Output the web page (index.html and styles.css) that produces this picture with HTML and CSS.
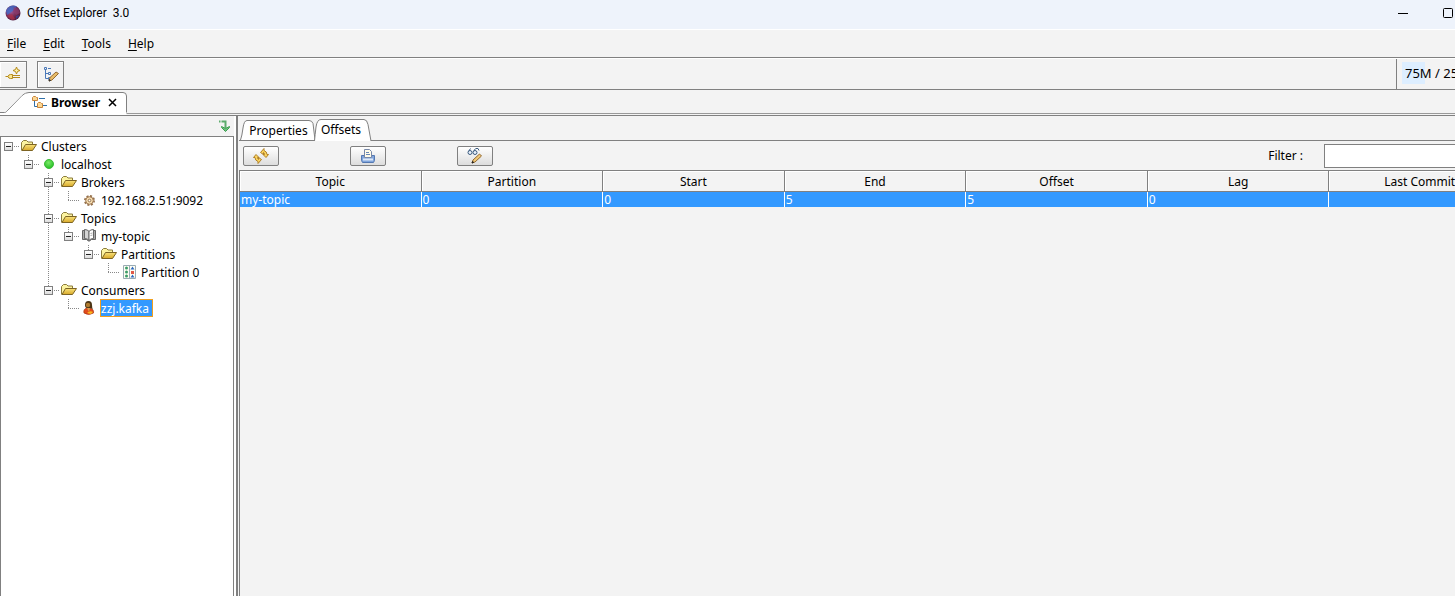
FILE: index.html
```
<!DOCTYPE html>
<html lang="en">
<head>
<meta charset="UTF-8">
<title>Offset Explorer 3.0</title>
<link rel="stylesheet" href="styles.css">
</head>
<body>

<svg class="defs" width="0" height="0">
  <defs>
    <linearGradient id="gold" x1="0" y1="0" x2="0" y2="1">
      <stop offset="0" stop-color="#f8e27a"/>
      <stop offset="1" stop-color="#d8a828"/>
    </linearGradient>
    <radialGradient id="ball" cx="0.35" cy="0.4" r="0.7">
      <stop offset="0" stop-color="#a05a9a"/>
      <stop offset="0.5" stop-color="#7a2f58"/>
      <stop offset="1" stop-color="#4a1838"/>
    </radialGradient>
    <radialGradient id="green" cx="0.45" cy="0.35" r="0.6">
      <stop offset="0" stop-color="#7be868"/>
      <stop offset="1" stop-color="#2cc22a"/>
    </radialGradient>
    <symbol id="folder" viewBox="0 0 16 16">
      <path d="M.5 12.500V4.500l2-2h3l1.500 1.500h4.500v3" fill="#fbf3a0" stroke="#8b7b3a"/>
      <path d="M1 12.500L4.500 6.500h11l-4 6z" fill="url(#gold)" stroke="#7d6423"/>
    </symbol>
  </defs>
</svg>

<header class="titlebar">
  <svg class="logo" width="16" height="16" viewBox="0 0 16 16">
    <circle cx="8" cy="8" r="7.500" fill="url(#ball)"/>
    <path d="M1 6a7.500 7.500 0 0 1 11-4.500L8 6 2 10z" fill="#3a6fd0" opacity=".75"/>
    <path d="M9 2a7 7 0 0 1 6 6l-4 2-3-4z" fill="#8c3c70" opacity=".7"/>
    <path d="M2 11l5-2 3 5-3 1z" fill="#b03048" opacity=".7"/>
    <path d="M11 11l4-1-4 4z" fill="#3048a0" opacity=".8"/>
  </svg>
  <span class="title">Offset Explorer&nbsp; 3.0</span>
  <button class="winbtn" aria-label="Minimize"><svg width="11" height="11" viewBox="0 0 11 11"><path d="M0 5.500h10" stroke="#000"/></svg></button>
  <button class="winbtn" aria-label="Maximize"><svg width="11" height="11" viewBox="0 0 11 11"><rect x=".5" y=".5" width="9" height="9" rx="1" fill="none" stroke="#000"/></svg></button>
</header>

<nav class="menubar">
  <button><u>F</u>ile</button>
  <button><u>E</u>dit</button>
  <button><u>T</u>ools</button>
  <button><u>H</u>elp</button>
</nav>

<div class="toolbar">
  <button class="tool first" aria-label="Add connection">
    <svg width="16" height="16" viewBox="0 0 16 16" fill="none" stroke="#b58a1c">
      <path d="M11.500 1l1 2.500 2.500 1-2.500 1-1 2.500-1-2.500-2.500-1 2.500-1z" fill="#fdf0a0"/>
      <path d="M.5 10.500H3M7.500 8.500h-2q-2 0-2.500 2 .5 2 2.500 2h2z" fill="#fbe68c"/>
      <path d="M8 9.500h7M8 11.500h7"/>
    </svg>
  </button>
  <button class="tool" aria-label="Edit tree">
    <svg width="16" height="16" viewBox="0 0 16 16" fill="none" stroke="#4a78b8">
      <path d="M1.500 1.500h2v2h-2zM2.500 4v8.500h3M2.500 7.500h3M5.500 6.500h2v2h-2zM5.500 11.500h2v2h-2zM5 2.500h3"/>
      <path d="M6 15l1-3.500L13 6l2.500 1.500L9 14z" fill="#e8bc68" stroke="#946a30"/>
      <path d="M6 15l.6-1.500.9 1z" fill="#222" stroke="#333"/>
    </svg>
  </button>
  <div class="memory"><span>75M / 25</span></div>
</div>

<div class="viewtabs">
  <div class="viewtab">
    <svg class="shape" width="128" height="24" viewBox="0 0 128 24">
      <path d="M0 21.500H4.500Q6 21.500 8 19L22 4.500Q25 1.500 29 1.500h94q3.500 0 3.500 3.500V24H0z" fill="#fff"/>
      <path d="M0 21.500H4.500Q6 21.500 8 19L22 4.500Q25 1.500 29 1.500h94q3.500 0 3.500 3.500v16.500" fill="none" stroke="#808080"/>
      <path d="M0 0H29Q25 1 22 4L8 18.500Q6 21 4.500 21H0z" fill="#f3f3f3"/>
    </svg>
    <svg class="tabicon" width="16" height="16" viewBox="0 0 16 16">
      <path d="M2.500 6v5.500H6M7 3.500h6M11 10.500h4" fill="none" stroke="#2f6fa8"/>
      <path d="M.5 5.500v-3l1-1h2l1 1h1v3z" fill="#fbd896" stroke="#c8843a"/>
      <path d="M5.500 12.500v-4l1-1h2l1 1h1v4z" fill="#fbd896" stroke="#c8843a"/>
    </svg>
    <b>Browser</b>
    <button class="close" aria-label="Close"><svg width="9" height="9" viewBox="0 0 9 9"><path d="M1 1l7 7M8 1L1 8" stroke="#000" stroke-width="1.500"/></svg></button>
  </div>
</div>

<main class="main">
  <aside class="side">
    <div class="sidebar-head">
      <button class="sync" aria-label="Follow selection">
        <svg width="13" height="13" viewBox="0 0 13 13"><path d="M1 1.500h1.500M3.500 1.500h4V8" fill="none" stroke="#5cac6c" stroke-width="2"/><path d="M3.500 6.500l4 2 4-2v1l-4 4-4-4z" fill="#6cc47c" stroke="#3c9c50"/></svg>
      </button>
    </div>
    <div class="treebox">
      <ul class="tree">
        <li>
          <div class="row"><i class="exp"></i><svg class="ico"><use href="#folder"/></svg><span>Clusters</span></div>
          <ul>
            <li>
              <div class="row"><i class="exp"></i><svg class="ico" viewBox="0 0 16 16"><circle cx="8" cy="8" r="4.500" fill="url(#green)" stroke="#3dbb38"/></svg><span>localhost</span></div>
              <ul>
                <li>
                  <div class="row"><i class="exp"></i><svg class="ico"><use href="#folder"/></svg><span>Brokers</span></div>
                  <ul>
                    <li><div class="row leaf"><svg class="ico" viewBox="0 0 16 16"><circle cx="8.500" cy="8.500" r="4.500" fill="none" stroke="#94704c" stroke-width="2" stroke-dasharray="2 1.530"/><circle cx="8.500" cy="8.500" r="3.800" fill="#f4dcb0" stroke="#a07850"/><circle cx="8.500" cy="8.500" r="1.300" fill="#fff" stroke="#94704c"/></svg><span>192.168.2.51:9092</span></div></li>
                  </ul>
                </li>
                <li>
                  <div class="row"><i class="exp"></i><svg class="ico"><use href="#folder"/></svg><span>Topics</span></div>
                  <ul>
                    <li>
                      <div class="row"><i class="exp"></i><svg class="ico" viewBox="0 0 16 16"><path d="M3 2.500H1.500v9h4l2 1.500h1l2-1.500h4v-9H13" fill="#aaa" stroke="#666"/><path d="M3.500 1.500q3 0 4.500 2v9q-1.500-2-4.500-2z" fill="#d4d4d4" stroke="#666"/><path d="M12.500 1.500q-3 0-4.500 2v9q1.500-2 4.500-2z" fill="#fff" stroke="#666"/><path d="M9.500 5.500l2-.5M9.500 7.500l2-.5" stroke="#aaa"/></svg><span>my-topic</span></div>
                      <ul>
                        <li>
                          <div class="row"><i class="exp"></i><svg class="ico"><use href="#folder"/></svg><span>Partitions</span></div>
                          <ul>
                            <li><div class="row leaf"><svg class="ico" viewBox="0 0 16 16"><path d="M2.500 1.500h12v13h-12zM8.500 1v14" fill="#fffef4" stroke="#9aacb4"/><g fill="#3c9c68"><circle cx="5.500" cy="4" r="1.500"/><circle cx="5.500" cy="8" r="1.500"/><circle cx="5.500" cy="12" r="1.500"/></g><path d="M11.500 2.500l2 3h-4zM11.500 10.500l2 3h-4z" fill="#2c68c0"/><path d="M10 7h3v3h-3z" fill="#e05848"/></svg><span>Partition 0</span></div></li>
                          </ul>
                        </li>
                      </ul>
                    </li>
                  </ul>
                </li>
                <li>
                  <div class="row"><i class="exp"></i><svg class="ico"><use href="#folder"/></svg><span>Consumers</span></div>
                  <ul>
                    <li><div class="row leaf"><svg class="ico" viewBox="0 0 16 16"><path d="M3 13q-1-4 3-5h3q4 1 3.500 5-5 3-9.500 0z" fill="#e24a1c" stroke="#a83410" stroke-width=".7"/><path d="M4 5q0-4 3.500-4T11 5q0 3 1 4l-3-1H6q-2 0-2-3z" fill="#4a3414"/><circle cx="7" cy="5" r="2.200" fill="#b07c30"/><path d="M6 8h3l-1 4z" fill="#d8a050"/><path d="M6 13q3-3 6-1l-2 2z" fill="#f8b820"/></svg><span class="selected">zzj.kafka</span></div></li>
                  </ul>
                </li>
              </ul>
            </li>
          </ul>
        </li>
      </ul>
    </div>
  </aside>

  <section class="content">
    <div class="tabs">
      <button class="tab properties">
        <svg class="shape" width="76" height="20" viewBox="0 0 76 20"><path d="M.5 20Q2 16 3 8 4 .5 7 .5h62q3 0 4 3L75 20" fill="#fff" stroke="#808080"/></svg>
        <span>Properties</span>
      </button>
      <button class="tab active">
        <svg class="shape" width="58" height="22" viewBox="0 0 58 22"><path d="M.5 22Q1 16 2 8 3 .5 7 .5h43q3 0 4 5l3 16.500" fill="#fff" stroke="#808080"/></svg>
        <span>Offsets</span>
      </button>
    </div>
    <div class="actions">
      <button class="action" aria-label="Refresh">
        <svg width="16" height="16" viewBox="0 0 16 16" fill="#fbd45c" stroke="#b08028"><path d="M7.500 4.500l3.500-4v2q3 1 3 4h1.500l-2.500 3-3-3h1.500q0-1.500-1-2v2z"/><path d="M8.500 11.500l-3.500 4v-2q-3-1-3-4H.5l2.500-3 3 3H4.500q0 1.500 1 2v-2z"/></svg>
      </button>
      <button class="action" aria-label="Print">
        <svg width="16" height="16" viewBox="0 0 16 16"><path d="M1.500 7.500h13v5l-1 2h-11l-1-2z" fill="#7fa4dc" stroke="#5478b0"/><path d="M4.500 9.500v-8h5l2 2v6z" fill="#fffbe8" stroke="#7888a8"/><path d="M6 4.500h3M6 6.500h4" stroke="#6888b8"/><path d="M3 11.500h10" stroke="#dce8f8" stroke-width="2"/></svg>
      </button>
      <button class="action" aria-label="View and edit">
        <svg width="16" height="16" viewBox="0 0 16 16"><path d="M1.500 3.500l2-3M6.500 3.500l2-3M9 .5h2l1 2" fill="none" stroke="#3c5c80"/><circle cx="3" cy="4.500" r="2" fill="#e8f0fa" stroke="#3c5c80"/><circle cx="8" cy="4.500" r="2" fill="#e8f0fa" stroke="#3c5c80"/><path d="M5 15l1-3 6.500-6 2 2L8 14z" fill="#f0c878" stroke="#946a30"/><path d="M5 15l.6-1.500 1 .8z" stroke="#222"/></svg>
      </button>
      <label for="filter">Filter :</label>
      <input id="filter" type="text">
    </div>
    <div class="tablewrap">
      <table>
        <thead>
          <tr><th>Topic</th><th>Partition</th><th>Start</th><th>End</th><th>Offset</th><th>Lag</th><th>Last Commit</th></tr>
        </thead>
        <tbody>
          <tr><td>my-topic</td><td>0</td><td>0</td><td>5</td><td>5</td><td>0</td><td></td></tr>
        </tbody>
      </table>
    </div>
  </section>
</main>

</body>
</html>
```

FILE: styles.css
```
* {
    box-sizing: border-box;
}

body {
    margin: 0;
    height: 100vh;
    display: flex;
    flex-direction: column;
    overflow: hidden;
    background: #f3f3f3;
    color: #000;
    font: 12px/18px "Noto Sans", "Open Sans", sans-serif;
}

button {
    margin: 0;
    padding: 0;
    border: 0;
    background: none;
    color: inherit;
    font: inherit;
}

svg {
    display: block;
    flex: none;
}

.defs {
    position: absolute;
}

/* title and menu */

.titlebar {
    display: flex;
    align-items: center;
    height: 30px;
    padding: 0 1px 3px 5px;
    gap: 6px;
    background: #eef3fb;
    border-bottom: 1px solid #fff;
    font-family: Roboto, sans-serif;
}

.title {
    flex: 1;
}

.winbtn {
    margin-left: 28px;
}

.menubar {
    display: flex;
    align-items: center;
    gap: 17px;
    height: 28px;
    padding-left: 7px;
    border-bottom: 1px solid #808080;
}

.menubar u {
    text-underline-offset: 2px;
}

/* toolbar */

.toolbar {
    display: flex;
    align-items: center;
    gap: 10px;
    height: 32px;
    border-top: 1px solid #fff;
    border-bottom: 1px solid #808080;
}

.tool {
    display: flex;
    align-items: center;
    justify-content: center;
    width: 27px;
    height: 27px;
    border: 1px solid #808080;
    box-shadow: inset 1px 1px #fff;
}

.tool.first {
    border-left: 0;
}

.memory {
    align-self: stretch;
    display: flex;
    align-items: center;
    width: 59px;
    margin-left: auto;
    padding: 0 0 2px 5px;
    border-left: 1px solid #808080;
    overflow: hidden;
    white-space: nowrap;
    font-size: 13px;
}

.memory span {
    padding: 2px 3px;
    background: linear-gradient(#ddeeff, #ddeeff) 0 0 / 23px 100% no-repeat;
}

/* view tabs */

.viewtabs {
    height: 26px;
    border-bottom: 1px solid #808080;
    background: linear-gradient(#999, #999) 0 23px / 100% 1px no-repeat;
}

.viewtab {
    position: relative;
    display: flex;
    align-items: center;
    width: 128px;
    height: 25px;
    padding-left: 32px;
}

.shape {
    position: absolute;
    left: 0;
    bottom: 0;
    z-index: -1;
}

.viewtab,
.tab {
    isolation: isolate;
}

.tabicon {
    margin-right: 3px;
}

.close {
    margin-left: 8px;
}

/* tree */

.main {
    flex: 1;
    display: flex;
    min-height: 0;
}

.side {
    display: flex;
    flex-direction: column;
    width: 236px;
    flex: none;
    border-right: 2px solid #fff;
}

.sidebar-head {
    display: flex;
    align-items: center;
    justify-content: flex-end;
    height: 20px;
    padding-right: 3px;
}

.treebox {
    flex: 1;
    border: 1px solid #808080;
    border-bottom: 0;
    background: #fff;
}

.tree,
.tree ul {
    margin: 0;
    padding: 0;
    list-style: none;
}

.tree {
    margin-left: -1px;
}

.tree ul {
    padding-left: 20px;
}

.tree ul li {
    background: repeating-linear-gradient(#888 0 1px, #fff 1px 2px) 8px 0 / 1px 100% no-repeat;
}

.tree ul li:last-child {
    background-size: 1px 9px;
}

.row {
    display: flex;
    align-items: center;
    height: 18px;
    padding-left: 4px;
    background: repeating-linear-gradient(90deg, #888 0 1px, #fff 1px 2px) 8px 9px / 12px 1px no-repeat;
}

.leaf {
    padding-left: 21px;
}

.exp {
    width: 9px;
    height: 9px;
    margin-right: 8px;
    border: 1px solid #808080;
    background: linear-gradient(#222, #222) 1px 3px / 5px 1px no-repeat, linear-gradient(#fff, #ddd);
}

.ico {
    width: 16px;
    height: 16px;
}

.row span {
    margin-left: 3px;
    padding: 2px 1px 0;
    white-space: nowrap;
}

.row .selected {
    height: 18px;
    padding: 0 3px 0 0;
    border: 1px solid #f0a020;
    background: #3399ff;
    color: #fff;
    line-height: 18px;
}

/* right pane */

.content {
    flex: 1;
    min-width: 0;
    display: flex;
    flex-direction: column;
    border-left: 2px solid #808080;
    padding-left: 1px;
}

.tabs {
    display: flex;
    align-items: flex-end;
    height: 25px;
    padding-left: 1px;
    background: linear-gradient(#808080, #808080) 0 100% / 100% 1px no-repeat;
}

.tab {
    position: relative;
    width: 58px;
    height: 22px;
}

.properties {
    width: 74px;
    height: 20px;
    margin-bottom: 1px;
    padding: 2px 0 0 3px;
}

.tab.active {
    z-index: 1;
    padding-right: 4px;
}

.actions {
    display: flex;
    align-items: center;
    height: 29px;
    padding-left: 4px;
}

.action {
    display: flex;
    align-items: center;
    justify-content: center;
    width: 36px;
    height: 20px;
    margin-right: 71px;
    border: 1px solid #808080;
    border-radius: 2px;
    background: linear-gradient(#fff, #ddd);
}

.actions label {
    margin-left: auto;
    margin-right: 21px;
}

.actions input {
    width: 131px;
    height: 24px;
    padding: 0 4px;
    border: 1px solid #808080;
    border-right: 0;
    background: #fff;
    font: inherit;
    outline: 0;
}

.tablewrap {
    flex: 1;
    overflow: hidden;
    border-top: 1px solid #808080;
    border-left: 1px solid #808080;
}

table {
    width: 1271px;
    table-layout: fixed;
    border-collapse: separate;
    border-spacing: 0;
}

th {
    height: 21px;
    padding: 2px 0 0;
    border-right: 1px solid #808080;
    border-bottom: 1px solid #808080;
    box-shadow: inset 1px 1px #fff;
    font-weight: normal;
}

td {
    height: 15px;
    padding: 0 1px;
    border-right: 1px solid #fff;
    background: #3399ff;
    color: #fff;
    line-height: 15px;
}
```
